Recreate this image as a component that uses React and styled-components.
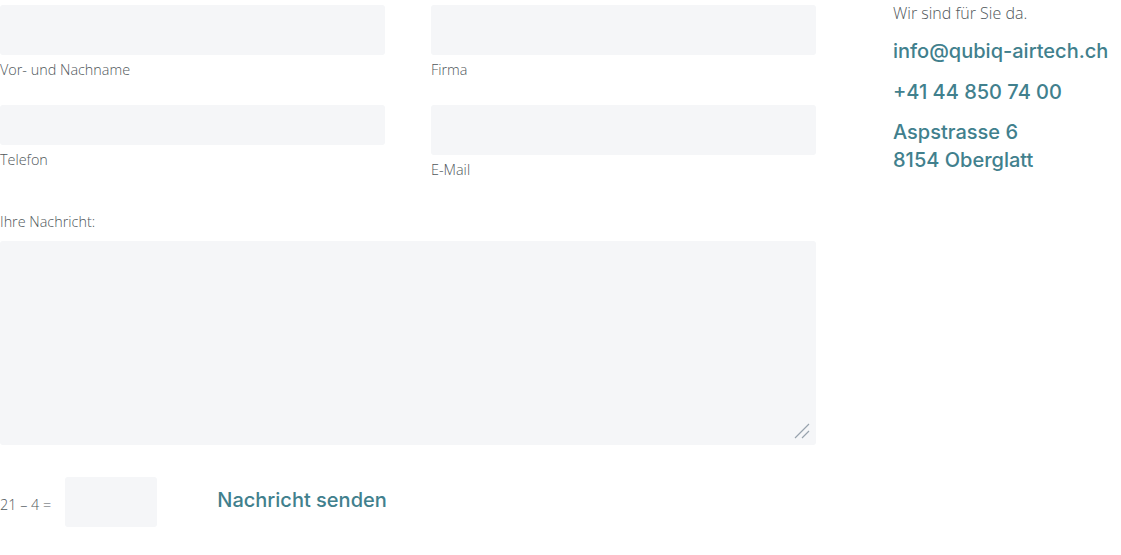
import React from "react";
import styled, { createGlobalStyle } from "styled-components";

const GlobalStyle = createGlobalStyle`
  html, body {
    margin: 0;
    padding: 0;
    background: #ffffff;
  }
  body {
    font-family: "Open Sans", "Noto Sans", sans-serif;
    color: #4f575b;
  }
`;

const accentFont = `"Inter", "Open Sans", sans-serif`;

const Page = styled.div`
  display: flex;
  align-items: flex-start;
  gap: 77px;
  padding-top: 5px;
`;

const Form = styled.form`
  width: 816px;
  display: flex;
  flex-direction: column;
`;

const FieldGrid = styled.div`
  display: grid;
  grid-template-columns: 385px 385px;
  column-gap: 46px;
  row-gap: 25px;
  align-items: start;
`;

const Field = styled.div`
  display: flex;
  flex-direction: column;
`;

const Input = styled.input`
  box-sizing: border-box;
  width: ${(p) => p.$width || "100%"};
  height: ${(p) => p.$height || 50}px;
  border: none;
  border-radius: 3px;
  background: #f5f6f8;
  padding: 0 12px;
  font: inherit;
  outline: none;
`;

const Label = styled.label`
  margin-top: 5px;
  font-size: 14.4px;
  line-height: 20px;
  font-weight: 300;
  color: #4f575b;
`;

const MessageLabel = styled(Label)`
  margin-top: 32px;
`;

const AreaWrap = styled.div`
  position: relative;
  margin-top: 9px;
`;

const TextArea = styled.textarea`
  display: block;
  box-sizing: border-box;
  width: 100%;
  height: 204px;
  border: none;
  border-radius: 3px;
  background: #f5f6f8;
  padding: 12px;
  font: inherit;
  outline: none;
  resize: none;
`;

const ResizeGrip = styled.svg`
  position: absolute;
  right: 6px;
  bottom: 6px;
  width: 16px;
  height: 16px;
  pointer-events: none;
`;

const CaptchaRow = styled.div`
  margin-top: 32px;
  display: flex;
  align-items: center;
`;

const CaptchaText = styled.span`
  font-size: 14.4px;
  font-weight: 300;
  color: #4f575b;
  margin-right: 14px;
  margin-top: 4px;
`;

const SendButton = styled.button`
  margin-left: 60px;
  margin-bottom: 4px;
  border: none;
  background: none;
  padding: 0;
  font-family: ${accentFont};
  font-size: 20px;
  font-weight: 500;
  color: #41808d;
  cursor: pointer;
`;

const Info = styled.div`
  display: flex;
  flex-direction: column;
  margin-top: -5px;
`;

const Intro = styled.p`
  margin: 0;
  font-size: 16px;
  line-height: 26px;
  font-weight: 300;
  color: #4f575b;
`;

const InfoLine = styled.p`
  margin: ${(p) => p.$gap || 12}px 0 0;
  font-family: ${accentFont};
  font-size: 20px;
  line-height: 28px;
  font-weight: 500;
  color: #41808d;
`;

export default function App() {
  return (
    <>
      <GlobalStyle />
      <Page>
        <Form onSubmit={(e) => e.preventDefault()}>
          <FieldGrid>
            <Field>
              <Input id="name" />
              <Label htmlFor="name">Vor- und Nachname</Label>
            </Field>
            <Field>
              <Input id="firma" />
              <Label htmlFor="firma">Firma</Label>
            </Field>
            <Field>
              <Input id="telefon" $height={40} />
              <Label htmlFor="telefon">Telefon</Label>
            </Field>
            <Field>
              <Input id="email" />
              <Label htmlFor="email">E-Mail</Label>
            </Field>
          </FieldGrid>
          <MessageLabel htmlFor="nachricht">Ihre Nachricht:</MessageLabel>
          <AreaWrap>
            <TextArea id="nachricht" />
            <ResizeGrip viewBox="0 0 16 16">
              <path d="M1 15 L15 1 M8 15 L15 8" stroke="#97a3ad" strokeWidth="1.2" fill="none" />
            </ResizeGrip>
          </AreaWrap>
          <CaptchaRow>
            <CaptchaText>21 – 4 =</CaptchaText>
            <Input $width="92px" />
            <SendButton type="submit">Nachricht senden</SendButton>
          </CaptchaRow>
        </Form>
        <Info>
          <Intro>Wir sind für Sie da.</Intro>
          <InfoLine $gap={11}>info@qubiq-airtech.ch</InfoLine>
          <InfoLine $gap={13}>+41 44 850 74 00</InfoLine>
          <InfoLine $gap={12}>
            Aspstrasse 6
            <br />
            8154 Oberglatt
          </InfoLine>
        </Info>
      </Page>
    </>
  );
}
